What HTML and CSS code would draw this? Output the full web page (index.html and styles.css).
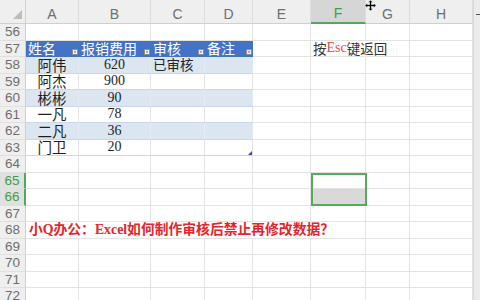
FILE: index.html
```html
<!DOCTYPE html>
<html lang="zh-CN">
<head>
<meta charset="utf-8">
<title>Excel</title>
<link rel="stylesheet" href="styles.css">
</head>
<body>
<div class="screen">
  <div class="sheet">
    <div class="row">
      <div class="corner"><svg width="26" height="24" viewBox="0 0 26 24"><path d="M22 10 V19 H13 Z" fill="#bcbcbc"/></svg></div>
      <div class="ch">A</div><div class="ch">B</div><div class="ch">C</div><div class="ch">D</div>
      <div class="ch">E</div><div class="ch sel">F</div><div class="ch">G</div><div class="ch">H</div>
    </div>
    <div class="row"><div class="rn">56</div><div class="c"></div><div class="c"></div><div class="c"></div><div class="c"></div><div class="c"></div><div class="c"></div><div class="c"></div><div class="c"></div></div>
    <div class="row">
      <div class="rn">57</div>
      <div class="c th"><span>姓名</span><svg class="dd" width="6" height="6" viewBox="0 0 6 6"><rect x="0.5" y="0.5" width="5" height="5" fill="#f3f3f3" stroke="#8c8c8c"/><path d="M1.8 2.5 H4.2 L3 3.8 Z" fill="#333"/></svg></div>
      <div class="c th"><span>报销费用</span><svg class="dd" width="6" height="6" viewBox="0 0 6 6"><rect x="0.5" y="0.5" width="5" height="5" fill="#f3f3f3" stroke="#8c8c8c"/><path d="M1.8 2.5 H4.2 L3 3.8 Z" fill="#333"/></svg></div>
      <div class="c th"><span>审核</span><svg class="dd" width="6" height="6" viewBox="0 0 6 6"><rect x="0.5" y="0.5" width="5" height="5" fill="#f3f3f3" stroke="#8c8c8c"/><path d="M1.8 2.5 H4.2 L3 3.8 Z" fill="#333"/></svg></div>
      <div class="c th"><span>备注</span><svg class="dd" width="6" height="6" viewBox="0 0 6 6"><rect x="0.5" y="0.5" width="5" height="5" fill="#f3f3f3" stroke="#8c8c8c"/><path d="M1.8 2.5 H4.2 L3 3.8 Z" fill="#333"/></svg></div>
      <div class="c"></div>
      <div class="c note nol">按<span class="esc">Esc</span>键返回</div>
      <div class="c"></div><div class="c"></div>
    </div>
    <div class="row band"><div class="rn">58</div><div class="c t nm">阿伟</div><div class="c t num">620</div><div class="c t txt">已审核</div><div class="c t"></div><div class="c"></div><div class="c"></div><div class="c"></div><div class="c"></div></div>
    <div class="row"><div class="rn">59</div><div class="c t nm">阿杰</div><div class="c t num">900</div><div class="c t"></div><div class="c t"></div><div class="c"></div><div class="c"></div><div class="c"></div><div class="c"></div></div>
    <div class="row band"><div class="rn">60</div><div class="c t nm">彬彬</div><div class="c t num">90</div><div class="c t"></div><div class="c t"></div><div class="c"></div><div class="c"></div><div class="c"></div><div class="c"></div></div>
    <div class="row"><div class="rn">61</div><div class="c t nm">一凡</div><div class="c t num">78</div><div class="c t"></div><div class="c t"></div><div class="c"></div><div class="c"></div><div class="c"></div><div class="c"></div></div>
    <div class="row band"><div class="rn">62</div><div class="c t nm">二凡</div><div class="c t num">36</div><div class="c t"></div><div class="c t"></div><div class="c"></div><div class="c"></div><div class="c"></div><div class="c"></div></div>
    <div class="row"><div class="rn">63</div><div class="c t nm">门卫</div><div class="c t num">20</div><div class="c t"></div><div class="c t end"><svg class="grip" width="4" height="4" viewBox="0 0 4 4"><path d="M4 0 V4 H0 Z" fill="#2b4f9e"/></svg></div><div class="c"></div><div class="c"></div><div class="c"></div><div class="c"></div></div>
    <div class="row"><div class="rn">64</div><div class="c"></div><div class="c"></div><div class="c"></div><div class="c"></div><div class="c"></div><div class="c"></div><div class="c"></div><div class="c"></div></div>
    <div class="row"><div class="rn sel">65</div><div class="c"></div><div class="c"></div><div class="c"></div><div class="c"></div><div class="c"></div><div class="c"></div><div class="c"></div><div class="c"></div></div>
    <div class="row"><div class="rn sel">66</div><div class="c"></div><div class="c"></div><div class="c"></div><div class="c"></div><div class="c"></div><div class="c fill"></div><div class="c"></div><div class="c"></div></div>
    <div class="row"><div class="rn">67</div><div class="c"></div><div class="c"></div><div class="c"></div><div class="c"></div><div class="c"></div><div class="c"></div><div class="c"></div><div class="c"></div></div>
    <div class="row"><div class="rn">68</div><div class="c title nol">小Q办公：Excel如何制作审核后禁止再修改数据？</div><div class="c nol"></div><div class="c nol"></div><div class="c nol"></div><div class="c nol"></div><div class="c"></div><div class="c"></div><div class="c"></div></div>
    <div class="row"><div class="rn">69</div><div class="c"></div><div class="c"></div><div class="c"></div><div class="c"></div><div class="c"></div><div class="c"></div><div class="c"></div><div class="c"></div></div>
    <div class="row"><div class="rn">70</div><div class="c"></div><div class="c"></div><div class="c"></div><div class="c"></div><div class="c"></div><div class="c"></div><div class="c"></div><div class="c"></div></div>
    <div class="row"><div class="rn">71</div><div class="c"></div><div class="c"></div><div class="c"></div><div class="c"></div><div class="c"></div><div class="c"></div><div class="c"></div><div class="c"></div></div>
    <div class="row"><div class="rn">72</div><div class="c"></div><div class="c"></div><div class="c"></div><div class="c"></div><div class="c"></div><div class="c"></div><div class="c"></div><div class="c"></div></div>
    <div class="selbox"></div>
  </div>
  <div class="strip"><span class="split"></span></div>
  <svg class="cursor" width="11" height="11" viewBox="0 0 11 11"><path d="M5.5 0 L8 2.5 H6.5 V4.5 H8.5 V3 L11 5.5 L8.5 8 V6.5 H6.5 V8.5 H8 L5.5 11 L3 8.5 H4.5 V6.5 H2.5 V8 L0 5.5 L2.5 3 V4.5 H4.5 V2.5 H3 Z" fill="#000" stroke="#fff" stroke-width="0.6"/></svg>
</div>
</body>
</html>
```

FILE: styles.css
```css
html, body {
  margin: 0;
  padding: 0;
  background: #fff;
}
body {
  width: 480px;
  height: 300px;
  overflow: hidden;
  font-family: "Noto Sans CJK SC", "Noto Sans", sans-serif;
}
.screen {
  display: flex;
  height: 300px;
  overflow: hidden;
  position: relative;
}
.sheet {
  flex: none;
  position: relative;
  display: grid;
  grid-template-columns: 26px 53px 72px 54px 48px 58px 55px 44px 63px;
  grid-template-rows: 24px repeat(17, 16.5px);
}
.row { display: contents; }

.corner {
  background: #efefef;
  border-right: 1px solid #cfcfcf;
  border-bottom: 1px solid #cfcfcf;
  box-sizing: border-box;
}
.corner svg { display: block; }
.ch {
  background: #efefef;
  border-right: 1px solid #dddddd;
  border-bottom: 1px solid #cfcfcf;
  box-sizing: border-box;
  color: #6e6e6e;
  font: 14px/1 "Liberation Sans", sans-serif;
  display: flex;
  align-items: center;
  justify-content: center;
  padding-top: 4px;
}
.ch.sel {
  background: #d6d6d6;
  color: #3f9f44;
  border-bottom: 2px solid #52a957;
}
.rn {
  background: #efefef;
  border-right: 1px solid #cfcfcf;
  border-bottom: 1px solid #e0e0e0;
  box-sizing: border-box;
  color: #6e6e6e;
  font: 13.5px/1 "Liberation Sans", sans-serif;
  display: flex;
  align-items: center;
  justify-content: center;
  overflow: hidden;
}
.rn.sel {
  background: #e0e0e0;
  color: #3f9f44;
  border-right: 2px solid #52a957;
}
.c {
  border-right: 1px solid #e3e3e3;
  border-bottom: 1px solid #e3e3e3;
  box-sizing: border-box;
  display: flex;
  align-items: center;
  min-width: 0;
  white-space: nowrap;
  color: #222;
  font-size: 14px;
  line-height: 1;
}
.c.nol { border-right-color: transparent; }
.c.fill { background: #d9d9d9; }

.th {
  background: #4472c4;
  border-right-color: #4472c4;
  border-bottom-color: #4472c4;
  color: #fff;
  font-size: 14px;
  padding-left: 2px;
}
.th .dd {
  flex: none;
  margin-left: auto;
  align-self: flex-end;
  margin-bottom: 1px;
  display: block;
}
.t { border-bottom-color: #c9d7ec; }
.band .t { background: #dce6f1; border-right-color: #e4ebf4; }
.nm {
  justify-content: center;
  font-size: 14.5px;
  color: #1e1e1e;
}
.num {
  justify-content: center;
  font: 14px/1 "Liberation Serif", "Noto Sans CJK SC", serif;
  color: #1e1e1e;
}
.txt {
  padding-left: 2px;
  font-size: 13.5px;
}
.t.end { justify-content: flex-end; align-items: flex-end; }
.grip { display: block; }

.note {
  padding-left: 2px;
  font-size: 13.5px;
  color: #333;
  overflow: visible;
}
.esc {
  color: #e8474b;
  font-family: "Liberation Serif", serif;
  font-size: 14px;
}
.title {
  padding-left: 3px;
  overflow: visible;
  color: #e4252c;
  font: bold 13.8px/1 "Liberation Serif", "Noto Sans CJK SC", serif;
}

.selbox {
  position: absolute;
  grid-column: 7 / 8;
  grid-row: 11 / 13;
  top: 0;
  left: 0;
  right: -1px;
  bottom: 0;
  border: 2px solid #55ab59;
  box-sizing: border-box;
}

.strip {
  flex: none;
  width: 7px;
  height: 300px;
  background: #ebebeb;
  border-left: 1px solid #d8d8d8;
  box-sizing: border-box;
}
.split {
  display: block;
  width: 4px;
  height: 1px;
  margin: 14px 0 0 2px;
  background: #555;
}
.cursor {
  position: absolute;
  left: 365px;
  top: 0;
}
```
